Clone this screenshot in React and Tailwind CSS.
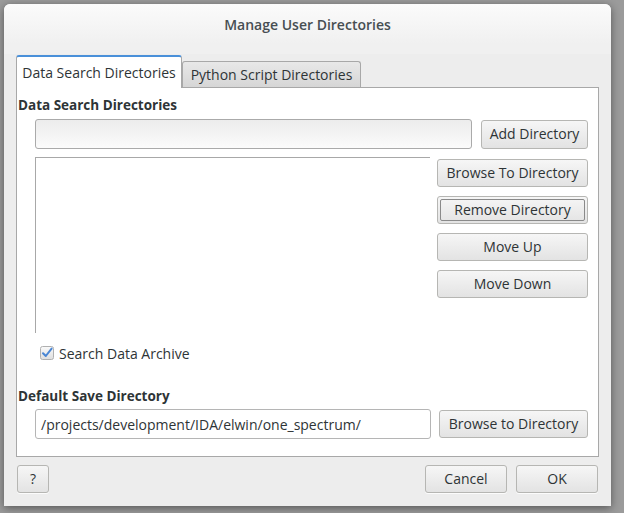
const font = { fontFamily: '"Open Sans", "Noto Sans", sans-serif' }

function Button({ children, className = '', focused = false }) {
    return (
        <button
            className={`relative flex items-center justify-center rounded-[3px] border border-[#b6b6b3] bg-gradient-to-b from-[#f6f6f6] to-[#e3e3e3] text-[14px] leading-[18px] text-[#2e3436] shadow-[0_1px_0_rgba(255,255,255,0.8)] ${className}`}
        >
            {focused && (
                <span className="absolute inset-[2px] rounded-[2px] border border-[#8a8a8a]" />
            )}
            <span className="relative">{children}</span>
        </button>
    )
}

function CheckIcon() {
    return (
        <svg width="14" height="14" viewBox="0 0 14 14">
            <defs>
                <linearGradient id="cb" x1="0" y1="0" x2="0" y2="1">
                    <stop offset="0" stopColor="#fafafa" />
                    <stop offset="1" stopColor="#dedede" />
                </linearGradient>
            </defs>
            <rect x="0.5" y="0.5" width="13" height="13" rx="2" fill="url(#cb)" stroke="#b0b0b0" />
            <path d="M3 7.2 L5.8 10 L11.6 2.6" fill="none" stroke="#4a86d4" strokeWidth="2" strokeLinecap="round" strokeLinejoin="round" />
        </svg>
    )
}

export default function App() {
    return (
        <div className="w-[624px] h-[513px] bg-[#9b9b9b] pl-[4px] pt-[4px]" style={font}>
            <div className="w-[607px] h-[502px] flex flex-col rounded-t-[6px] bg-[#ededed] shadow-[0_2px_8px_rgba(0,0,0,0.45)] text-[#2e3436]">
                <div className="h-[40px] flex items-center justify-center rounded-t-[6px] bg-gradient-to-b from-[#fbfbfb] to-[#f0f0f0] text-[14px] font-semibold text-[#474e52]">
                    Manage User Directories
                </div>
                <div className="h-[10px] bg-[#f0f0f0]" />

                <div className="px-[12px]">
                    <div className="flex items-end h-[33px]">
                        <div className="relative w-[166px] h-[33px] flex items-center justify-center bg-white border border-b-0 border-[#a8a8a8] border-t-[#4a90d9] border-t-2 rounded-t-[3px] -mb-px z-10 text-[14px]">
                            <span className="-mt-[1px]">Data Search Directories</span>
                        </div>
                        <div className="w-[179px] h-[26px] flex items-center justify-center bg-gradient-to-b from-[#e8e8e8] to-[#d6d6d6] border border-b-0 border-[#a8a8a8] rounded-t-[3px] text-[14px]">
                            <span className="-mt-[1px]">Python Script Directories</span>
                        </div>
                    </div>

                    <div className="h-[370px] bg-white border border-[#a8a8a8] flex flex-col pt-[9px] pr-[10px]">
                        <div className="pl-[1px] h-[17px] leading-[17px] text-[13.5px] font-bold">Data Search Directories</div>
                        <div className="flex items-center gap-[9px] mt-[5px] pl-[18px]">
                            <div className="w-[437px] h-[30px] rounded-[3px] border border-[#aaaaaa] bg-gradient-to-b from-[#ececec] to-[#fbfbfb]" />
                            <Button className="w-[107px] h-[29px]">Add Directory</Button>
                        </div>

                        <div className="flex gap-[7px] mt-[8px] pl-[18px]">
                            <div className="w-[395px] h-[176px] border-t border-l border-[#a8a8a8]" />
                            <div className="flex flex-col gap-[9px] mt-[2px]">
                                <Button className="w-[151px] h-[28px]">Browse To Directory</Button>
                                <Button className="w-[151px] h-[28px]" focused>Remove Directory</Button>
                                <Button className="w-[151px] h-[28px]">Move Up</Button>
                                <Button className="w-[151px] h-[28px]">Move Down</Button>
                            </div>
                        </div>

                        <div className="flex items-center gap-[5px] mt-[12px] pl-[23px] h-[16px] text-[14px]">
                            <CheckIcon />
                            <span>Search Data Archive</span>
                        </div>

                        <div className="pl-[1px] mt-[27px] h-[17px] leading-[17px] text-[13.5px] font-bold">Default Save Directory</div>
                        <div className="flex items-center gap-[8px] mt-[4px] pl-[18px]">
                            <div className="w-[396px] h-[30px] flex items-center px-[5px] rounded-[3px] border border-[#b5b5b5] bg-white text-[14px]">
                                /projects/development/IDA/elwin/one_spectrum/
                            </div>
                            <Button className="w-[149px] h-[28px]">Browse to Directory</Button>
                        </div>
                    </div>
                </div>

                <div className="flex items-center justify-between px-[13px] mt-[8px]">
                    <Button className="w-[32px] h-[28px]">?</Button>
                    <div className="flex gap-[9px]">
                        <Button className="w-[82px] h-[28px]">Cancel</Button>
                        <Button className="w-[82px] h-[28px]">OK</Button>
                    </div>
                </div>
            </div>
        </div>
    )
}
